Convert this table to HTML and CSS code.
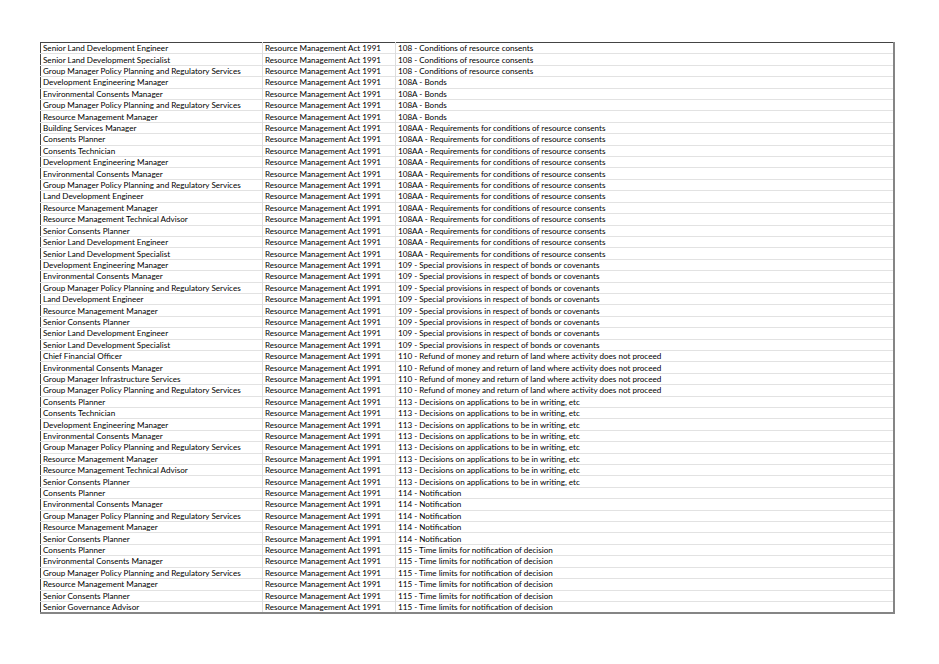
FILE: index.html
```html
<!DOCTYPE html>
<html lang="en">
<head>
<meta charset="utf-8">
<title>Delegations</title>
<link rel="stylesheet" href="styles.css">
</head>
<body>
<div class="page">
<table class="sheet">
<colgroup><col class="c1"><col class="c2"><col class="c3"></colgroup>
<tbody>
<tr><td>Senior Land Development Engineer</td><td>Resource Management Act 1991</td><td>108 - Conditions of resource consents</td></tr>
<tr><td>Senior Land Development Specialist</td><td>Resource Management Act 1991</td><td>108 - Conditions of resource consents</td></tr>
<tr><td>Group Manager Policy Planning and Regulatory Services</td><td>Resource Management Act 1991</td><td>108 - Conditions of resource consents</td></tr>
<tr><td>Development Engineering Manager</td><td>Resource Management Act 1991</td><td>108A - Bonds</td></tr>
<tr><td>Environmental Consents Manager</td><td>Resource Management Act 1991</td><td>108A - Bonds</td></tr>
<tr><td>Group Manager Policy Planning and Regulatory Services</td><td>Resource Management Act 1991</td><td>108A - Bonds</td></tr>
<tr><td>Resource Management Manager</td><td>Resource Management Act 1991</td><td>108A - Bonds</td></tr>
<tr><td>Building Services Manager</td><td>Resource Management Act 1991</td><td>108AA - Requirements for conditions of resource consents</td></tr>
<tr><td>Consents Planner</td><td>Resource Management Act 1991</td><td>108AA - Requirements for conditions of resource consents</td></tr>
<tr><td>Consents Technician</td><td>Resource Management Act 1991</td><td>108AA - Requirements for conditions of resource consents</td></tr>
<tr><td>Development Engineering Manager</td><td>Resource Management Act 1991</td><td>108AA - Requirements for conditions of resource consents</td></tr>
<tr><td>Environmental Consents Manager</td><td>Resource Management Act 1991</td><td>108AA - Requirements for conditions of resource consents</td></tr>
<tr><td>Group Manager Policy Planning and Regulatory Services</td><td>Resource Management Act 1991</td><td>108AA - Requirements for conditions of resource consents</td></tr>
<tr><td>Land Development Engineer</td><td>Resource Management Act 1991</td><td>108AA - Requirements for conditions of resource consents</td></tr>
<tr><td>Resource Management Manager</td><td>Resource Management Act 1991</td><td>108AA - Requirements for conditions of resource consents</td></tr>
<tr><td>Resource Management Technical Advisor</td><td>Resource Management Act 1991</td><td>108AA - Requirements for conditions of resource consents</td></tr>
<tr><td>Senior Consents Planner</td><td>Resource Management Act 1991</td><td>108AA - Requirements for conditions of resource consents</td></tr>
<tr><td>Senior Land Development Engineer</td><td>Resource Management Act 1991</td><td>108AA - Requirements for conditions of resource consents</td></tr>
<tr><td>Senior Land Development Specialist</td><td>Resource Management Act 1991</td><td>108AA - Requirements for conditions of resource consents</td></tr>
<tr><td>Development Engineering Manager</td><td>Resource Management Act 1991</td><td>109 - Special provisions in respect of bonds or covenants</td></tr>
<tr><td>Environmental Consents Manager</td><td>Resource Management Act 1991</td><td>109 - Special provisions in respect of bonds or covenants</td></tr>
<tr><td>Group Manager Policy Planning and Regulatory Services</td><td>Resource Management Act 1991</td><td>109 - Special provisions in respect of bonds or covenants</td></tr>
<tr><td>Land Development Engineer</td><td>Resource Management Act 1991</td><td>109 - Special provisions in respect of bonds or covenants</td></tr>
<tr><td>Resource Management Manager</td><td>Resource Management Act 1991</td><td>109 - Special provisions in respect of bonds or covenants</td></tr>
<tr><td>Senior Consents Planner</td><td>Resource Management Act 1991</td><td>109 - Special provisions in respect of bonds or covenants</td></tr>
<tr><td>Senior Land Development Engineer</td><td>Resource Management Act 1991</td><td>109 - Special provisions in respect of bonds or covenants</td></tr>
<tr><td>Senior Land Development Specialist</td><td>Resource Management Act 1991</td><td>109 - Special provisions in respect of bonds or covenants</td></tr>
<tr><td>Chief Financial Officer</td><td>Resource Management Act 1991</td><td>110 - Refund of money and return of land where activity does not proceed</td></tr>
<tr><td>Environmental Consents Manager</td><td>Resource Management Act 1991</td><td>110 - Refund of money and return of land where activity does not proceed</td></tr>
<tr><td>Group Manager Infrastructure Services</td><td>Resource Management Act 1991</td><td>110 - Refund of money and return of land where activity does not proceed</td></tr>
<tr><td>Group Manager Policy Planning and Regulatory Services</td><td>Resource Management Act 1991</td><td>110 - Refund of money and return of land where activity does not proceed</td></tr>
<tr><td>Consents Planner</td><td>Resource Management Act 1991</td><td>113 - Decisions on applications to be in writing, etc</td></tr>
<tr><td>Consents Technician</td><td>Resource Management Act 1991</td><td>113 - Decisions on applications to be in writing, etc</td></tr>
<tr><td>Development Engineering Manager</td><td>Resource Management Act 1991</td><td>113 - Decisions on applications to be in writing, etc</td></tr>
<tr><td>Environmental Consents Manager</td><td>Resource Management Act 1991</td><td>113 - Decisions on applications to be in writing, etc</td></tr>
<tr><td>Group Manager Policy Planning and Regulatory Services</td><td>Resource Management Act 1991</td><td>113 - Decisions on applications to be in writing, etc</td></tr>
<tr><td>Resource Management Manager</td><td>Resource Management Act 1991</td><td>113 - Decisions on applications to be in writing, etc</td></tr>
<tr><td>Resource Management Technical Advisor</td><td>Resource Management Act 1991</td><td>113 - Decisions on applications to be in writing, etc</td></tr>
<tr><td>Senior Consents Planner</td><td>Resource Management Act 1991</td><td>113 - Decisions on applications to be in writing, etc</td></tr>
<tr><td>Consents Planner</td><td>Resource Management Act 1991</td><td>114 - Notification</td></tr>
<tr><td>Environmental Consents Manager</td><td>Resource Management Act 1991</td><td>114 - Notification</td></tr>
<tr><td>Group Manager Policy Planning and Regulatory Services</td><td>Resource Management Act 1991</td><td>114 - Notification</td></tr>
<tr><td>Resource Management Manager</td><td>Resource Management Act 1991</td><td>114 - Notification</td></tr>
<tr><td>Senior Consents Planner</td><td>Resource Management Act 1991</td><td>114 - Notification</td></tr>
<tr><td>Consents Planner</td><td>Resource Management Act 1991</td><td>115 - Time limits for notification of decision</td></tr>
<tr><td>Environmental Consents Manager</td><td>Resource Management Act 1991</td><td>115 - Time limits for notification of decision</td></tr>
<tr><td>Group Manager Policy Planning and Regulatory Services</td><td>Resource Management Act 1991</td><td>115 - Time limits for notification of decision</td></tr>
<tr><td>Resource Management Manager</td><td>Resource Management Act 1991</td><td>115 - Time limits for notification of decision</td></tr>
<tr><td>Senior Consents Planner</td><td>Resource Management Act 1991</td><td>115 - Time limits for notification of decision</td></tr>
<tr><td>Senior Governance Advisor</td><td>Resource Management Act 1991</td><td>115 - Time limits for notification of decision</td></tr>
</tbody>
</table>
</div>
</body>
</html>
```

FILE: styles.css
```css
html, body {
  margin: 0;
  padding: 0;
  background: #ffffff;
}

.page {
  padding: 42px 0 0 40px;
}

.sheet {
  border-collapse: collapse;
  table-layout: fixed;
  width: 855px;
  border-top: 1px solid #444444;
  border-left: 1px solid #444444;
  border-right: 2px solid #858585;
  border-bottom: 2px solid #858585;
  font-family: Lato, "Open Sans", sans-serif;
  font-size: 8.1px;
  color: #000000;
}

.c1 { width: 222px; }
.c2 { width: 133px; }
.c3 { width: auto; }

.sheet td {
  height: 11.42px;
  padding: 0 0 0 2px;
  line-height: 10px;
  white-space: nowrap;
  overflow: hidden;
  border-top: 1px solid #e2e2e2;
  border-left: 1px solid #dddddd;
  vertical-align: middle;
  box-sizing: border-box;
}

.sheet tr:first-child td {
  border-top: none;
}

.sheet td:first-child {
  border-left: none;
}
```
